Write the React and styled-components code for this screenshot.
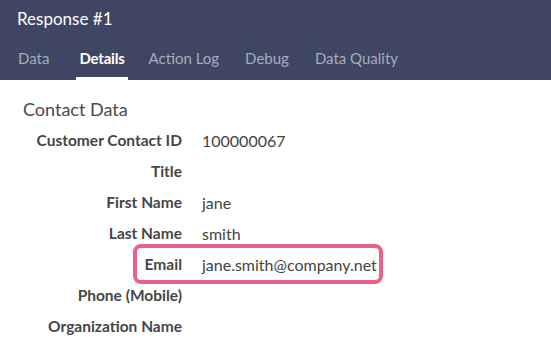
import styled, { createGlobalStyle } from 'styled-components';

const Global = createGlobalStyle`
  body {
    margin: 0;
    background: #fff;
    font-family: Lato, "Open Sans", sans-serif;
  }
`;

const Header = styled.div`
  background: #3f4663;
  color: #fff;
`;

const Title = styled.div`
  font-size: 17px;
  padding: 8px 17px 0;
  height: 30px;
  line-height: 22px;
`;

const Tabs = styled.div`
  display: flex;
  gap: 20px;
  padding: 0 15px;
  height: 42px;
`;

const Tab = styled.div`
  box-sizing: border-box;
  height: 42px;
  padding: 11px 3px 0;
  margin-left: ${(p) => (p.$active ? '4px' : '0')};
  margin-right: ${(p) => (p.$active ? '-2px' : '0')};
  font-size: 15px;
  line-height: 18px;
  color: ${(p) => (p.$active ? '#fff' : '#a7abbc')};
  font-weight: ${(p) => (p.$active ? 700 : 400)};
  letter-spacing: ${(p) => (p.$active ? '-0.2px' : '0')};
  border-bottom: 3px solid ${(p) => (p.$active ? '#fff' : 'transparent')};
`;

const Body = styled.div`
  padding: 18px 0 0 23px;
  color: #444;
`;

const Section = styled.div`
  font-size: 18px;
  line-height: 22px;
  color: #4a4a4a;
  margin-bottom: 5px;
`;

const Rows = styled.div`
  display: grid;
  grid-template-columns: 159px 1fr;
  column-gap: 20px;
`;

const Row = styled.div`
  display: contents;
`;

const Label = styled.div`
  position: relative;
  text-align: right;
  font-weight: 700;
  font-size: 15.5px;
  line-height: 31px;
  color: #464646;
  white-space: nowrap;
  ${(p) =>
    p.$mark &&
    `
    &::after {
      content: '';
      position: absolute;
      left: 110px;
      top: -5px;
      width: 250px;
      height: 40px;
      box-sizing: border-box;
      border: 4px solid #ec6286;
      border-radius: 8px;
    }
  `}
`;

const Value = styled.div`
  font-size: 16px;
  line-height: 31px;
  color: #444;
`;

const rows = [
  ['Customer Contact ID', '100000067'],
  ['Title', ''],
  ['First Name', 'jane'],
  ['Last Name', 'smith'],
  ['Email', 'jane.smith@company.net', true],
  ['Phone (Mobile)', ''],
  ['Organization Name', ''],
];

export default function App() {
  return (
    <>
      <Global />
      <Header>
        <Title>Response #1</Title>
        <Tabs>
          <Tab>Data</Tab>
          <Tab $active>Details</Tab>
          <Tab>Action Log</Tab>
          <Tab>Debug</Tab>
          <Tab>Data Quality</Tab>
        </Tabs>
      </Header>
      <Body>
        <Section>Contact Data</Section>
        <Rows>
          {rows.map(([label, value, mark]) => (
            <Row key={label}>
              <Label $mark={mark}>{label}</Label>
              <Value>{value}</Value>
            </Row>
          ))}
        </Rows>
      </Body>
    </>
  );
}
